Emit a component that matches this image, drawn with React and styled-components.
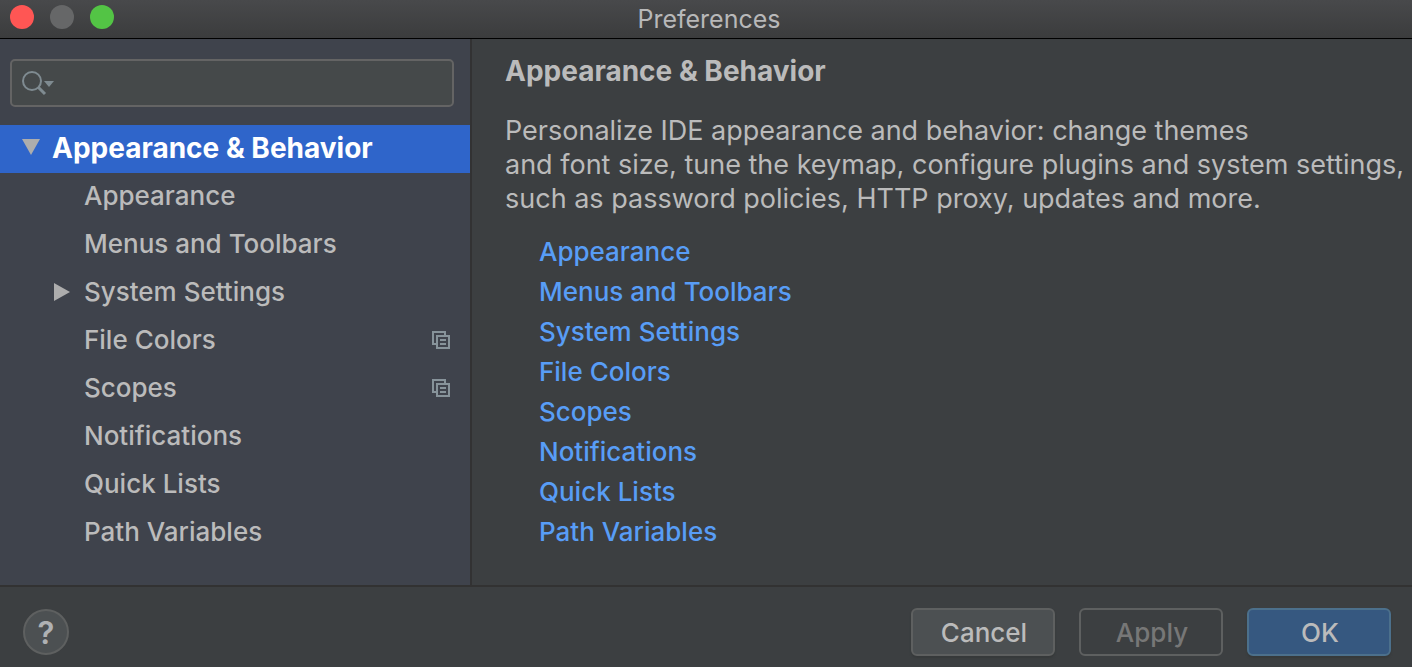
import { useState } from "react";
import styled, { createGlobalStyle } from "styled-components";

const GlobalStyle = createGlobalStyle`
  * {
    box-sizing: border-box;
  }
  body {
    margin: 0;
    background: #3c3f41;
    color: #bbbbbb;
    font-family: Inter, "Liberation Sans", sans-serif;
    font-size: 26px;
    font-weight: 500;
    line-height: 34px;
  }
  button,
  input {
    font: inherit;
  }
`;

const Window = styled.div`
  display: flex;
  flex-direction: column;
  min-height: 100vh;
`;

const TitleBar = styled.header`
  display: grid;
  grid-template-columns: 1fr auto 1fr;
  align-items: center;
  height: 39px;
  padding: 0 4px 0 10px;
  border-bottom: 1px solid #000000;
  background: linear-gradient(#48494b, #3b3c3d);
`;

const TrafficLights = styled.div`
  display: flex;
  gap: 16px;
  padding-bottom: 4px;
`;

const Light = styled.button`
  width: 24px;
  height: 24px;
  padding: 0;
  border: none;
  border-radius: 50%;
  background: ${({ $color }) => $color};
`;

const WindowTitle = styled.h1`
  margin: 0;
  font-size: 25px;
  font-weight: normal;
  color: #b8b8b9;
`;

const Body = styled.div`
  display: flex;
  flex: 1;
`;

const Sidebar = styled.aside`
  flex: 0 0 472px;
  min-width: 0;
  border-right: 2px solid #323233;
  background: #3f434c;
`;

const SearchBox = styled.label`
  display: flex;
  align-items: center;
  height: 48px;
  margin: 20px 16px 18px 10px;
  padding: 0 10px;
  border: 2px solid #646464;
  border-radius: 5px;
  background: #45494a;
`;

const SearchInput = styled.input`
  flex: 1;
  min-width: 0;
  padding: 0 8px;
  border: none;
  outline: none;
  background: transparent;
  color: #bbbbbb;
`;

const Tree = styled.ul`
  margin: 0;
  padding: 0;
  list-style: none;
`;

const TreeItem = styled.button`
  display: flex;
  align-items: center;
  width: 100%;
  height: 48px;
  padding: 0 20px 2px ${({ $level }) => ($level ? 52 : 20)}px;
  border: none;
  background: ${({ $selected }) => ($selected ? "#2f65ca" : "transparent")};
  color: ${({ $selected }) => ($selected ? "#ffffff" : "#bbbbbb")};
  font-size: ${({ $level }) => ($level ? 26 : 28)}px;
  font-weight: ${({ $level }) => ($level ? 500 : 700)};
  text-align: left;
`;

const Arrow = styled.span`
  display: flex;
  flex: 0 0 32px;
`;

const ItemLabel = styled.span`
  flex: 1;
  white-space: nowrap;
`;

const Content = styled.main`
  flex: 1;
  min-width: 0;
  padding: 15px 0 30px 33px;
`;

const Heading = styled.h2`
  margin: 0;
  font-size: 28px;
  font-weight: 700;
`;

const Description = styled.p`
  margin: 26px 0 16px;
  font-size: 27px;
  font-weight: 400;
  white-space: nowrap;
`;

const Links = styled.ul`
  margin: 0;
  padding: 0 0 0 34px;
  list-style: none;
`;

const LinkItem = styled.li`
  line-height: 40px;
`;

const Link = styled.a`
  color: #589df6;
  text-decoration: none;
`;

const Footer = styled.footer`
  display: flex;
  align-items: center;
  gap: 24px;
  height: 82px;
  padding: 10px 21px 0 23px;
  border-top: 2px solid #323232;
`;

const HelpButton = styled.button`
  width: 46px;
  height: 46px;
  margin-right: auto;
  padding: 2px 0 0;
  border: 2px solid #5e6060;
  border-radius: 50%;
  background: #4c5052;
  color: #afb1b3;
  font-size: 31px;
  font-weight: 600;
`;

const Button = styled.button`
  width: 144px;
  height: 48px;
  padding: 2px 0 0 2px;
  border: 2px solid ${({ $primary }) => ($primary ? "#4c708c" : "#5e6060")};
  border-radius: 6px;
  background: ${({ $primary }) => ($primary ? "#365880" : "#4c5052")};
  box-shadow: 0 2px 2px #36393a;
  color: #bbbbbb;

  &:disabled {
    background: transparent;
    box-shadow: none;
    color: #777777;
  }
`;

const SearchIcon = () => (
  <svg width="34" height="28" viewBox="0 0 34 28" fill="none" aria-hidden="true">
    <circle cx="10" cy="12" r="9" stroke="#7f8b91" strokeWidth="2" />
    <path d="M16 18l7 7" stroke="#7f8b91" strokeWidth="3" />
    <path d="M22 12h10l-5 6z" fill="#7f8b91" />
  </svg>
);

const ArrowIcon = ({ open }) => (
  <svg width="22" height="20" viewBox="0 0 22 20" fill="#adadad" aria-hidden="true">
    <path d={open ? "M2 1h18l-9 16z" : "M2 1v18l16-9z"} />
  </svg>
);

const ProjectIcon = () => (
  <svg width="18" height="18" viewBox="0 0 18 18" fill="#87939a" aria-label="For current project">
    <path d="M0 0h14v4h-2V2H2v10h2v2H0z" />
    <path fillRule="evenodd" d="M4 4h14v14H4zM6 6v10h10V6z" />
    <path d="M8 8h6v2H8zM8 12h6v2H8z" />
  </svg>
);

const pages = [
  { name: "Appearance" },
  { name: "Menus and Toolbars" },
  { name: "System Settings", group: true },
  { name: "File Colors", project: true },
  { name: "Scopes", project: true },
  { name: "Notifications" },
  { name: "Quick Lists" },
  { name: "Path Variables" },
];

const root = "Appearance & Behavior";

function App() {
  const [selected, setSelected] = useState(root);
  const [query, setQuery] = useState("");

  return (
    <>
      <GlobalStyle />
      <Window>
        <TitleBar>
          <TrafficLights>
            <Light $color="#ff5654" aria-label="Close" />
            <Light $color="#666768" aria-label="Minimize" />
            <Light $color="#53c445" aria-label="Zoom" />
          </TrafficLights>
          <WindowTitle>Preferences</WindowTitle>
        </TitleBar>
        <Body>
          <Sidebar>
            <SearchBox>
              <SearchIcon />
              <SearchInput
                type="text"
                aria-label="Search settings"
                value={query}
                onChange={(e) => setQuery(e.target.value)}
              />
            </SearchBox>
            <Tree>
              <li>
                <TreeItem
                  $level={0}
                  $selected={selected === root}
                  onClick={() => setSelected(root)}
                >
                  <Arrow>
                    <ArrowIcon open />
                  </Arrow>
                  <ItemLabel>{root}</ItemLabel>
                </TreeItem>
              </li>
              {pages.map((page) => (
                <li key={page.name}>
                  <TreeItem
                    $level={1}
                    $selected={selected === page.name}
                    onClick={() => setSelected(page.name)}
                  >
                    <Arrow>{page.group && <ArrowIcon />}</Arrow>
                    <ItemLabel>{page.name}</ItemLabel>
                    {page.project && <ProjectIcon />}
                  </TreeItem>
                </li>
              ))}
            </Tree>
          </Sidebar>
          <Content>
            <Heading>{root}</Heading>
            <Description>
              Personalize IDE appearance and behavior: change themes
              <br />
              and font size, tune the keymap, configure plugins and system settings,
              <br />
              such as password policies, HTTP proxy, updates and more.
            </Description>
            <Links>
              {pages.map((page) => (
                <LinkItem key={page.name}>
                  <Link href="#">{page.name}</Link>
                </LinkItem>
              ))}
            </Links>
          </Content>
        </Body>
        <Footer>
          <HelpButton aria-label="Help">?</HelpButton>
          <Button>Cancel</Button>
          <Button disabled>Apply</Button>
          <Button $primary>OK</Button>
        </Footer>
      </Window>
    </>
  );
}

export default App;
